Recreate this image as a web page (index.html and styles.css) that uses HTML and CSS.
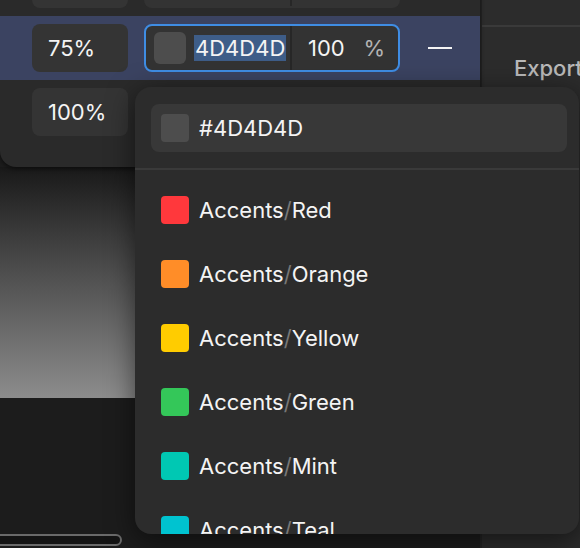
FILE: index.html
```html
<!DOCTYPE html>
<html lang="en">
<head>
	<meta charset="UTF-8">
	<meta name="viewport" content="width=device-width, initial-scale=1.0">
	<title>Gradient stops</title>
	<link rel="stylesheet" href="styles.css">
</head>
<body>
	<div class="app">
		<div class="main">
			<div class="stops">
				<!-- first stop is scrolled up out of view, only its boxes peek in -->
				<div class="stop">
					<div class="pos"></div>
					<div class="color-field">
						<span class="swatch"></span>
						<span class="hex"></span>
						<span class="sep"></span>
					</div>
					<button class="remove"></button>
				</div>
				<div class="stop selected">
					<div class="pos">75%</div>
					<div class="color-field active">
						<span class="swatch"></span>
						<span class="hex"><span class="hex-text picked">4D4D4D</span></span>
						<span class="sep"></span>
						<span class="alpha">100</span>
						<span class="unit">%</span>
					</div>
					<button class="remove"></button>
				</div>
				<!-- color field of this stop sits under the picker -->
				<div class="stop">
					<div class="pos">100%</div>
					<div class="color-field">
						<span class="swatch"></span>
						<span class="hex"></span>
						<span class="sep"></span>
					</div>
					<button class="remove"></button>
				</div>
			</div>

			<div class="canvas">
				<div class="preview"></div>
				<div class="scroll"></div>
			</div>
		</div>

		<div class="divider"></div>

		<div class="side">
			<div class="side-top"></div>
			<div class="side-title">Export</div>
		</div>

		<div class="popover">
			<div class="search">
				<span class="search-swatch"></span>
				<span class="search-text">#4D4D4D</span>
			</div>
			<div class="rule"></div>
			<ul class="styles">
				<li><span class="chip red"></span>Accents<span class="slash">/</span>Red</li>
				<li><span class="chip orange"></span>Accents<span class="slash">/</span>Orange</li>
				<li><span class="chip yellow"></span>Accents<span class="slash">/</span>Yellow</li>
				<li><span class="chip green"></span>Accents<span class="slash">/</span>Green</li>
				<li><span class="chip mint"></span>Accents<span class="slash">/</span>Mint</li>
				<li><span class="chip teal"></span>Accents<span class="slash">/</span>Teal</li>
			</ul>
		</div>
	</div>
</body>
</html>
```

FILE: styles.css
```css
* {
	margin: 0;
	padding: 0;
	box-sizing: border-box;
}

body {
	width: 580px;
	height: 548px;
	overflow: hidden;
	background-color: #1c1c1c;
	font-family: Inter, "Noto Sans", sans-serif;
	font-size: 22px;
	line-height: 28px;
	color: #f4f4f4;
}

.app {
	position: relative;
	display: flex;
	height: 548px;
}

.main {
	width: 480px;
	display: flex;
	flex-direction: column;
}

/* gradient stop list */
.stops {
	position: relative;
	z-index: 1;
	margin-top: -48px;
	padding-bottom: 23px;
	background-color: #2a2a2a;
	border-bottom-left-radius: 16px;
	box-shadow: 0 2px 4px rgba(0, 0, 0, .5);
}

.stop {
	height: 64px;
	display: flex;
	align-items: center;
	gap: 16px;
	padding: 0 16px 0 32px;
}

.stop.selected {
	background-color: #3b4361;
}

.pos {
	width: 96px;
	height: 48px;
	display: flex;
	align-items: center;
	padding-left: 16px;
	border-radius: 8px;
	background-color: #343434;
}

.color-field {
	width: 256px;
	height: 48px;
	display: flex;
	align-items: center;
	padding: 0 13px 0 8px;
	border: 2px solid transparent;
	border-radius: 8px;
	background-color: #333;
}

.color-field.active {
	border-color: #3f8de4;
}

.swatch {
	width: 32px;
	height: 32px;
	border-radius: 6px;
	background-color: #4d4d4d;
	margin-right: 8px;
}

.hex {
	width: 96px;
}

.hex-text {
	display: inline-block;
	padding: 0 1px;
	line-height: 26px;
}

.hex-text.picked {
	background-color: #3e5d88;
}

.sep {
	align-self: stretch;
	width: 2px;
	background-color: #272727;
}

.alpha {
	padding-left: 16px;
}

.unit {
	margin-left: auto;
	color: #b4b4b4;
}

.remove {
	width: 48px;
	height: 48px;
	border: none;
	background: none;
	display: flex;
	align-items: center;
	justify-content: center;
}

.remove::before {
	content: "";
	width: 24px;
	height: 2px;
	background-color: #f4f4f4;
}

/* canvas under the panel */
.canvas {
	flex: 1;
	display: flex;
	flex-direction: column;
	background-color: #1c1c1c;
}

.preview {
	height: 231px;
	background: linear-gradient(#191919, #3c3c3c 30%, #8c8c8c);
}

.scroll {
	margin: auto 0 2px -10px;
	width: 132px;
	height: 12px;
	border: 2px solid #6a6a6a;
	border-radius: 6px;
	background-color: #141414;
}

.divider {
	width: 2px;
	background-color: #242424;
}

.side {
	flex: 1;
	min-width: 0;
	background-color: #2c2c2c;
	overflow: hidden;
}

.side-top {
	height: 27px;
	border-bottom: 2px solid #3a3a3a;
}

.side-title {
	padding: 27px 0 0 32px;
	white-space: nowrap;
	font-weight: 500;
	color: #b9b9b9;
}

/* color style picker */
.popover {
	position: absolute;
	z-index: 5;
	left: 135px;
	top: 87px;
	width: 444px;
	height: 447px;
	padding: 17px 12px 0 16px;
	border-radius: 16px;
	background-color: #2c2c2c;
	box-shadow: 0 6px 28px rgba(0, 0, 0, .55);
	overflow: hidden;
}

.search {
	height: 48px;
	display: flex;
	align-items: center;
	gap: 10px;
	padding-left: 10px;
	border-radius: 8px;
	background-color: #383838;
}

.search-swatch {
	width: 28px;
	height: 28px;
	border-radius: 4px;
	background-color: #4d4d4d;
}

.rule {
	height: 2px;
	margin: 16px -12px 0 -16px;
	background-color: #3a3a3a;
}

.styles {
	list-style: none;
	padding-top: 8px;
}

.styles li {
	height: 64px;
	display: flex;
	align-items: center;
	padding-left: 10px;
}

.chip {
	width: 28px;
	height: 28px;
	border-radius: 4px;
	margin-right: 10px;
}

.slash {
	color: #777;
}

.red { background-color: #ff383c; }
.orange { background-color: #ff8d28; }
.yellow { background-color: #ffcc00; }
.green { background-color: #34c759; }
.mint { background-color: #00c8b3; }
.teal { background-color: #00c3d0; }
```
